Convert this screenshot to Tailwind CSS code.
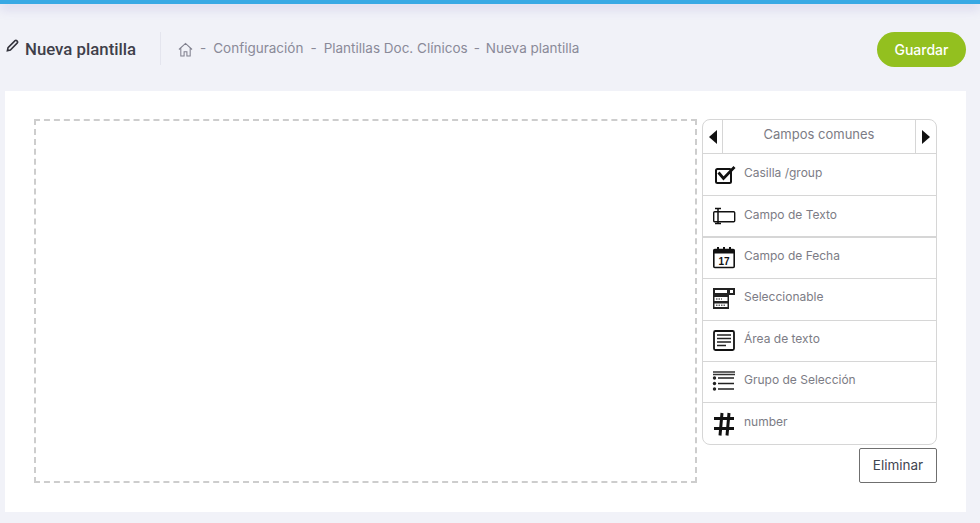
<!DOCTYPE html>
<html lang="en">
<head>
    <meta charset="UTF-8">
    <title>Nueva plantilla</title>
    <script src="https://cdn.jsdelivr.net/npm/@tailwindcss/browser@4"></script>
</head>
<body class="bg-[#f1f2f8] font-['Inter',sans-serif]">
    <div class="h-[523px] w-[980px] overflow-hidden">
        <!-- top bar -->
        <div class="h-[4px] bg-[#38a9e4] shadow-[0_3px_12px_rgba(110,100,190,0.4)]"></div>

        <!-- sub header -->
        <div class="flex h-[87px] items-start pl-[6px] pr-[14px] pt-[28px]">
            <div class="flex h-[33px] w-[155px] items-center border-r border-[#e4e5ee]">
                <svg class="mb-[6px] mr-[6px] h-[13px] w-[13px] text-[#33333c]" viewBox="0 0 14 14" fill="none" stroke="currentColor" stroke-width="1.700">
                    <path d="M1.500 12.500l.7-3.200L9.800 1.800c.5-.5 1.200-.5 1.700 0l.7.7c.5.5.5 1.200 0 1.700L4.700 11.800l-3.200.7z"/>
                </svg>
                <h1 class="mt-[3px] font-['Roboto',sans-serif] text-[16.800px] font-medium text-[#3f3f4a]">Nueva plantilla</h1>
            </div>
            <div class="ml-[17px] flex h-[32px] items-center text-[13.500px] text-[#8a8a98]">
                <svg class="mt-[3px] h-[15px] w-[15px]" viewBox="0 0 16 16" fill="none" stroke="#80808e" stroke-width="1.100">
                    <path d="M1 8l7-6.500L15 8M3 6.500V15h3.500v-4.500h3V15H13V6.500"/>
                </svg>
                <span class="ml-[7px]">-</span>
                <span class="ml-[7px]">Configuración</span>
                <span class="ml-[7px]">-</span>
                <span class="ml-[7px]">Plantillas Doc. Clínicos</span>
                <span class="ml-[6px]">-</span>
                <span class="ml-[6px]">Nueva plantilla</span>
            </div>
            <button class="ml-auto h-[35px] w-[89px] rounded-full bg-[#93c01f] text-[14px] font-medium text-white">Guardar</button>
        </div>

        <!-- card -->
        <div class="ml-[5px] flex h-[421px] w-[961px] items-start gap-[5px] bg-white pl-[29px] pt-[28px]">
            <div class="h-[364px] w-[663px] border-2 border-dashed border-[#cdcdcd]"></div>

            <div class="w-[235px]">
                <div class="overflow-hidden rounded-[8px] border border-[#d6d6d6] text-[12px] text-[#7c7c85]">
                    <div class="flex h-[34px] items-center border-b border-[#d6d6d6]">
                        <div class="flex h-full w-[20px] items-center justify-center border-r border-[#d6d6d6]">
                            <svg class="h-[14px] w-[8px]" viewBox="0 0 8 14"><path d="M8 0v14L0 7z" fill="#111"/></svg>
                        </div>
                        <div class="mb-[3px] flex-1 text-center text-[13px]">Campos comunes</div>
                        <div class="flex h-full w-[21px] items-center justify-center border-l border-[#d6d6d6]">
                            <svg class="h-[14px] w-[8px]" viewBox="0 0 8 14"><path d="M0 0v14l8-7z" fill="#111"/></svg>
                        </div>
                    </div>

                    <div class="flex h-[42px] items-center border-b border-[#d6d6d6] pl-[9px]">
                        <svg class="h-[24px] w-[24px]" viewBox="0 0 24 24" fill="none">
                            <rect x="4" y="6" width="15" height="14" rx="1.500" stroke="#111" stroke-width="2"/>
                            <path d="M6.500 9.500l5 6L22.500 4" stroke="#111" stroke-width="2.800"/>
                        </svg>
                        <span class="mb-[4px] ml-[8px]">Casilla /group</span>
                    </div>

                    <div class="flex h-[42px] items-center border-b-2 border-[#d6d6d6] pl-[9px]">
                        <svg class="h-[24px] w-[24px]" viewBox="0 0 24 24" fill="none" stroke="#111">
                            <rect x="1.700" y="7.700" width="21" height="10" rx="1" stroke-width="1.400"/>
                            <path d="M6 4.500v15M3 4.500h6M3 19.500h6" stroke-width="1.500"/>
                        </svg>
                        <span class="mb-[3px] ml-[8px]">Campo de Texto</span>
                    </div>

                    <div class="flex h-[41px] items-center border-b border-[#d6d6d6] pl-[9px]">
                        <svg class="h-[24px] w-[24px]" viewBox="0 0 24 24" fill="none">
                            <rect x="1.800" y="3.500" width="20.400" height="18" rx="1" stroke="#111" stroke-width="1.600"/>
                            <rect x="1.800" y="3.500" width="20.400" height="4" fill="#111"/>
                            <path d="M6 1v5M12 1v5M18 1v5" stroke="#111" stroke-width="2"/>
                            <text x="12" y="18.500" text-anchor="middle" font-family="Liberation Sans" font-size="10" font-weight="700" fill="#111">17</text>
                        </svg>
                        <span class="mb-[4px] ml-[8px]">Campo de Fecha</span>
                    </div>

                    <div class="flex h-[42px] items-center border-b border-[#d6d6d6] pl-[9px]">
                        <svg class="h-[24px] w-[24px]" viewBox="0 0 24 24" fill="none">
                            <rect x="1" y="0" width="22" height="7" fill="#222"/>
                            <rect x="1" y="7" width="16" height="14" fill="#222"/>
                            <rect x="3" y="2" width="12" height="3" fill="#fff"/>
                            <rect x="18" y="2" width="3" height="3" fill="#fff"/>
                            <rect x="2.500" y="9" width="13" height="4" fill="#fff"/>
                            <rect x="2.500" y="15.500" width="13" height="3.500" fill="#fff"/>
                            <path d="M4 11h6M4 17.200h9" stroke="#222" stroke-dasharray="1.500 1"/>
                        </svg>
                        <span class="mb-[6px] ml-[8px]">Seleccionable</span>
                    </div>

                    <div class="flex h-[41px] items-center border-b border-[#d6d6d6] pl-[9px]">
                        <svg class="h-[24px] w-[24px]" viewBox="0 0 24 24" fill="none">
                            <rect x="2" y="2" width="20" height="19" rx="1.500" stroke="#111" stroke-width="1.800"/>
                            <path d="M5 6h14M5 9.500h14M5 13h14M5 16.500h9" stroke="#222" stroke-width="1.500"/>
                        </svg>
                        <span class="mb-[4px] ml-[8px]">Área de texto</span>
                    </div>

                    <div class="flex h-[41px] items-center border-b border-[#d6d6d6] pl-[9px]">
                        <svg class="h-[24px] w-[24px]" viewBox="0 0 24 24" fill="none">
                            <path d="M1 2h22M1 4.500h22" stroke="#333" stroke-width="1.300"/>
                            <path d="M6 8h16M6 13.500h16M6 19h16" stroke="#222" stroke-width="1.400"/>
                            <circle cx="2.500" cy="8" r="1.700" fill="#222"/>
                            <circle cx="2.500" cy="13.500" r="1.700" fill="#222"/>
                            <circle cx="2.500" cy="19" r="1.700" fill="#222"/>
                        </svg>
                        <span class="mb-[4px] ml-[8px]">Grupo de Selección</span>
                    </div>

                    <div class="flex h-[41px] items-center pl-[9px]">
                        <svg class="h-[24px] w-[24px]" viewBox="0 0 24 24" fill="none" stroke="#111" stroke-width="3">
                            <path d="M10 1L8 23.500M17 1l-2 22.500M2 6.500h20M2 16.500h20"/>
                        </svg>
                        <span class="mb-[4px] ml-[8px]">number</span>
                    </div>
                </div>

                <div class="mt-[3px] flex justify-end">
                    <button class="h-[35px] w-[78px] rounded-[2px] border border-[#6f6f6f] text-[13.500px] text-[#3f4550]">Eliminar</button>
                </div>
            </div>
        </div>
    </div>
</body>
</html>
